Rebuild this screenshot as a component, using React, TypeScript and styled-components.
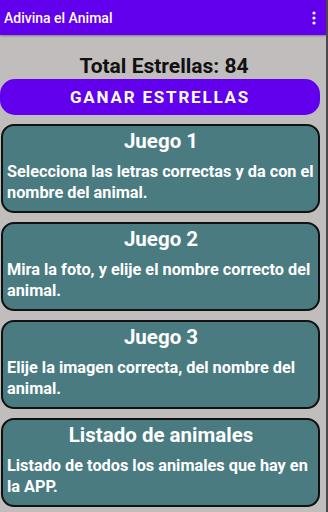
import styled, { createGlobalStyle } from "styled-components";

const GlobalStyle = createGlobalStyle`
  html, body {
    margin: 0;
    padding: 0;
    background: #c1bdbd;
  }
  body {
    font-family: Roboto, "Noto Sans", sans-serif;
  }
`;

const Screen = styled.div`
  width: 328px;
  height: 512px;
  display: flex;
  overflow: hidden;
`;

const Main = styled.div`
  width: 326px;
  display: flex;
  flex-direction: column;
`;

const Edge = styled.div`
  width: 2px;
  background: #4a4848;
`;

const AppBar = styled.header`
  height: 35px;
  flex-shrink: 0;
  background: #6200ee;
  display: flex;
  align-items: center;
  justify-content: space-between;
  padding: 0 10px 0 4px;
  box-shadow: 0 1px 2px rgba(0, 0, 0, 0.35);
`;

const AppTitle = styled.h1`
  margin: 0;
  color: #ffffff;
  font-size: 14px;
  font-weight: 500;
`;

const Content = styled.main`
  display: flex;
  flex-direction: column;
  padding: 18px 6px 0 0;
`;

const Total = styled.div`
  text-align: center;
  font-size: 21px;
  font-weight: 700;
  color: #111;
  line-height: 26px;
  padding-left: 8px;
`;

const EarnButton = styled.button`
  height: 36px;
  margin: 0 0 9px 0;
  border: none;
  border-radius: 15px;
  background: #6200ee;
  color: #ffffff;
  font-family: inherit;
  font-size: 17px;
  font-weight: 700;
  letter-spacing: 1.8px;
  text-transform: uppercase;
`;

const Card = styled.section`
  height: 89px;
  box-sizing: border-box;
  margin: 0 0 9px 1px;
  border: 2px solid #111;
  border-radius: 13px;
  background: #4a7b80;
  color: #ffffff;
  padding: 1px 3px 0 4px;
`;

const CardTitle = styled.h2`
  margin: 0;
  text-align: center;
  font-size: 20.5px;
  font-weight: 700;
  line-height: 28px;
`;

const CardText = styled.p`
  margin: 6px 0 0;
  font-size: 16.3px;
  font-weight: 700;
  line-height: 21px;
`;

const Kebab = () => (
  <svg width="4" height="14" viewBox="0 0 4 14" fill="#fff">
    <circle cx="2" cy="2" r="1.6" />
    <circle cx="2" cy="7" r="1.6" />
    <circle cx="2" cy="12" r="1.6" />
  </svg>
);

const games = [
  { title: "Juego 1", text: "Selecciona las letras correctas y da con el nombre del animal." },
  { title: "Juego 2", text: "Mira la foto, y elije el nombre correcto del animal." },
  { title: "Juego 3", text: "Elije la imagen correcta, del nombre del animal." },
  { title: "Listado de animales", text: "Listado de todos los animales que hay en la APP." },
];

export default function App() {
  return (
    <>
      <GlobalStyle />
      <Screen>
        <Main>
          <AppBar>
            <AppTitle>Adivina el Animal</AppTitle>
            <Kebab />
          </AppBar>
          <Content>
            <Total>Total Estrellas: 84</Total>
            <EarnButton>Ganar estrellas</EarnButton>
            {games.map((g) => (
              <Card key={g.title}>
                <CardTitle>{g.title}</CardTitle>
                <CardText>{g.text}</CardText>
              </Card>
            ))}
          </Content>
        </Main>
        <Edge />
      </Screen>
    </>
  );
}
